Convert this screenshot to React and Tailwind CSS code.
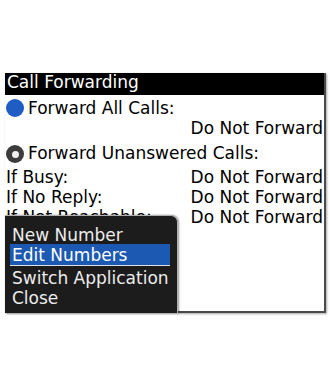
export default function App() {
  const rows = [
    ['If Busy:', 'Do Not Forward'],
    ['If No Reply:', 'Do Not Forward'],
    ['If Not Reachable:', 'Do Not Forward'],
  ]

  return (
    <div className="w-[330px] h-[385px] bg-white pt-[73px] font-['DejaVu_Sans',sans-serif] text-[17px] text-black">
      <div className="relative ml-[5px] w-[321px] h-[240px] bg-white border-r-2 border-b-2 border-[#4a4a4a] shadow-[1px_1px_2px_rgba(0,0,0,0.35)]">
        {/* Title bar */}
        <div className="h-[22px] bg-black text-white leading-[19px] pl-[2px]">Call Forwarding</div>

        {/* Forward all */}
        <div className="mt-[2px] h-[21px] leading-[20px] flex items-center gap-[4px] pl-[1px]">
          <span className="w-[18px] h-[18px] rounded-full bg-[#1f5cc4]" />
          <span>Forward All Calls:</span>
        </div>
        <div className="h-[20px] leading-[20px] text-right pr-[1px] whitespace-nowrap">Do Not Forward</div>

        {/* Forward unanswered */}
        <div className="mt-[5px] h-[24px] flex items-start gap-[4px] pl-[1px]">
          <span className="mt-[2px] w-[18px] h-[18px] rounded-full bg-[#3c3c3c] flex items-center justify-center">
            <span className="w-[7px] h-[7px] rounded-full bg-[#f0f0f0]" />
          </span>
          <span className="leading-[20px]">Forward Unanswered Calls:</span>
        </div>

        {rows.map(([label, value]) => (
          <div key={label} className="h-[20px] leading-[20px] flex justify-between pl-[1px] pr-[1px] whitespace-nowrap">
            <span>{label}</span>
            <span>{value}</span>
          </div>
        ))}

        {/* Menu */}
        <div className="absolute left-0 bottom-[-2px] w-[173px] h-[98px] bg-[#1c1c1c] border-t border-r border-[#b0b0b0] rounded-tr-[7px] text-[#ececec] pt-[9px] shadow-[1px_0_2px_rgba(0,0,0,0.4)]">
          <div className="h-[19px] leading-[20px] pl-[7px]">New Number</div>
          <div className="ml-[5px] mr-[7px] h-[21px] bg-[#1c59b3] text-white pt-[2px] leading-[19px] pl-[2px]">Edit Numbers</div>
          <div className="ml-[5px] mr-[7px] h-[1px] bg-[#e0e0e0]" />
          <div className="mt-[2px] h-[20px] leading-[20px] pl-[7px]">Switch Application</div>
          <div className="h-[20px] leading-[20px] pl-[7px]">Close</div>
        </div>
      </div>
    </div>
  )
}
